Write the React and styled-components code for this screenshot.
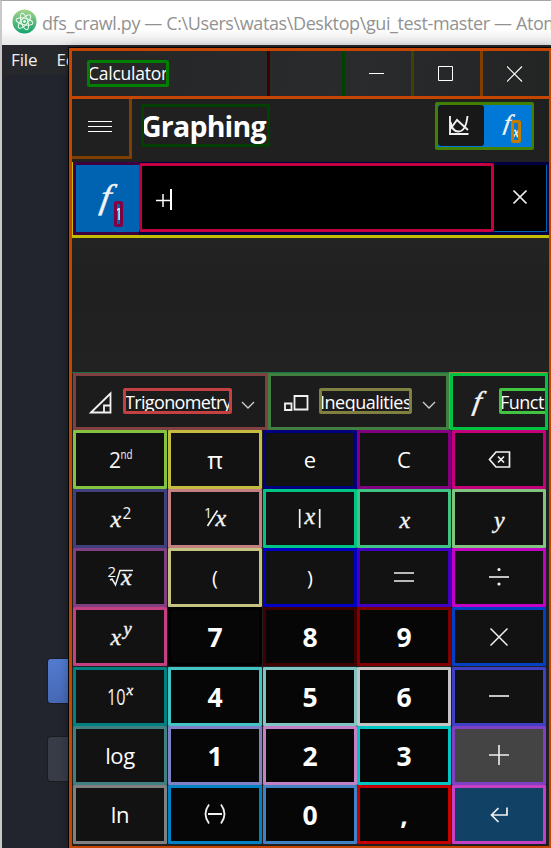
import React from "react";
import styled, { createGlobalStyle } from "styled-components";

const GlobalStyle = createGlobalStyle`
  * { box-sizing: border-box; }
  html, body { margin: 0; padding: 0; overflow: hidden; background: #22252d; }
  body { font-family: "Open Sans", "Noto Sans", sans-serif; }
  svg { display: block; flex: none; }
`;

const Editor = styled.div`
  position: relative;
  width: 551px;
  height: 848px;
  overflow: hidden;
  border-left: 2px solid #c9c9c9;
  border-top: 1px solid #a6a6a6;
  background: #22252d;
`;

const EditorTitle = styled.div`
  display: flex;
  align-items: center;
  height: 44px;
  padding: 0 0 1px 10px;
  gap: 5px;
  background: linear-gradient(#fff 0, #fff 28px, #e6e6e6 44px);
  color: #929292;
  font-size: 18px;
  letter-spacing: -0.39px;
  white-space: nowrap;
  & > svg { margin-top: -2px; }
`;

const EditorMenu = styled.div`
  display: flex;
  gap: 19px;
  height: 30px;
  padding-left: 9px;
  background: #27282c;
  color: #f0f0f0;
  font-size: 17px;
  line-height: 29px;
  letter-spacing: -0.1px;
`;

const EditorPanel = styled.div`
  display: flex;
  flex-direction: column;
  gap: 34px;
  padding: 584px 0 0 46px;
`;

const PanelButton = styled.div`
  width: 40px;
  height: 44px;
  border-radius: 3px;
  background: ${(p) => (p.$primary ? "linear-gradient(#527bd0, #4668b5)" : "#383c47")};
  box-shadow: 0 0 0 1px #1a1c22;
`;

const Calculator = styled.main`
  position: absolute;
  left: 67px;
  top: 47px;
  width: 483px;
  height: 801px;
  border: 3px solid #c64600;
  box-shadow: 0 0 0 1px #050505, 0 0 10px rgba(0, 0, 0, 0.35);
  background: #202020;
  color: #fff;
  overflow: hidden;
`;

const TitleBar = styled.div`
  display: grid;
  grid-template-columns: 198px 75px 69px 69px 66px;
  height: 48px;
  border-bottom: 3px solid #c64600;
  background: linear-gradient(100deg, #252525, #292b2d 60%, #232424);
`;

const TitleCell = styled.div`
  display: flex;
  align-items: center;
  justify-content: ${(p) => (p.$start ? "flex-start" : "center")};
  padding-left: ${(p) => (p.$start ? "15px" : "0")};
  border-right: ${(p) => (p.$line ? `3px solid ${p.$line}` : "0")};
  & > svg { margin-right: 2px; }
`;

const Tag = styled.div`
  width: ${(p) => p.$w}px;
  height: ${(p) => p.$h}px;
  flex: none;
  border: 3px solid ${(p) => p.$c};
  border-radius: 2px;
  font-size: ${(p) => p.$size}px;
  font-weight: ${(p) => p.$weight || 400};
  letter-spacing: ${(p) => p.$track || 0}px;
  line-height: ${(p) => p.$line}px;
  text-indent: ${(p) => p.$indent ?? -1}px;
  white-space: nowrap;
  overflow: hidden;
`;

const Header = styled.div`
  display: flex;
  height: 63px;
  background: #202020;
`;

const MenuButton = styled.div`
  width: 60px;
  height: 60px;
  border-right: 3px solid #803f00;
  border-bottom: 3px solid #803f00;
`;

const Heading = styled.div`
  padding: 5px 0 0 9px;
  width: 303px;
`;

const ModeSwitch = styled.div`
  display: flex;
  width: 99px;
  height: 48px;
  margin-top: 3px;
  border: 3px solid #418000;
  border-radius: 2px;
  background: #0078d7;
`;

const ModeOption = styled.div`
  width: ${(p) => (p.$active ? 47 : 46)}px;
  height: ${(p) => (p.$active ? 42 : 41)}px;
  border-radius: 3px;
  background: ${(p) => (p.$active ? "#0078d7" : "#181818")};
`;

const FunctionRow = styled.div`
  display: flex;
  height: 76px;
  border-left: 1px solid #c4bd00;
  border-bottom: 3px solid #c4bd00;
  background: #000040;
`;

const FunctionBadge = styled.div`
  width: 66px;
  height: 73px;
  border: 3px solid #3d003e;
  border-right: 0;
  background: #0063b1;
`;

const Expression = styled.div`
  width: 355px;
  height: 69px;
  margin-top: 1px;
  border: 3px solid #c40041;
  border-radius: 2px;
  background: #000;
`;

const RemoveButton = styled.div`
  width: 53px;
  height: 67px;
  margin-top: 3px;
  border-right: 1px solid #0063b1;
  border-bottom: 1px solid #0063b1;
  background: #000;
`;

const Blank = styled.div`
  height: 134px;
  background: linear-gradient(#232323, #202020 40%, #222);
`;

const Categories = styled.div`
  display: grid;
  grid-template-columns: 195px 181px 100px;
  height: 58px;
  padding-left: 1px;
  border-top: 1px solid #176f43;
`;

const Category = styled.div`
  display: flex;
  height: 57px;
  width: ${(p) => p.$w}px;
  margin-left: ${(p) => p.$shift || 0}px;
  border: 3px solid ${(p) => p.$c};
  box-shadow: ${(p) => (p.$outer ? `-1px -1px 0 ${p.$outer}` : "none")};
  background: #1c1c1c;
  padding-top: 12px;
  overflow: hidden;
  & > svg { margin-top: -12px; }
`;

const Keypad = styled.div`
  display: grid;
  grid-template-columns: 95px 95px 94px 95px 94px;
  grid-template-rows: 59px 59px 59px 60px 59px 59px 59px;
  padding-left: 1px;
`;

const Key = styled.div`
  display: flex;
  align-items: center;
  justify-content: center;
  width: 94px;
  height: 59px;
  border: 3px solid ${(p) => p.$c};
  border-radius: 1px;
  background: ${(p) => p.$bg || "#121212"};
  font-size: ${(p) => p.$size || (p.$digit ? 26.5 : 22)}px;
  font-weight: ${(p) => (p.$digit ? 700 : 400)};
  line-height: 53px;
  padding-top: ${(p) => (p.$digit ? 1 : 0)}px;
  letter-spacing: ${(p) => p.$track || 0}px;
`;

const Art = styled.svg`
  fill: none;
  stroke: ${(p) => p.$tone || "#f1f1f1"};
  stroke-width: ${(p) => p.$stroke || 1.5};
  text {
    fill: #f4f4f4;
    stroke: none;
    font-family: "Open Sans", sans-serif;
  }
  text.math {
    font-family: "Liberation Serif", serif;
    font-style: italic;
    stroke: #f4f4f4;
    stroke-width: 0.4;
  }
`;

const Glyph = ({ children, stroke }) => (
  <Art width="88" height="53" viewBox="0 0 88 53" $stroke={stroke}>
    {children}
  </Art>
);

const T = ({ x, y, s, w, children }) => (
  <text x={x} y={y} fontSize={s} textLength={w} lengthAdjust="spacingAndGlyphs">{children}</text>
);

const M = ({ x, y, s = 24, children }) => (
  <text className="math" x={x} y={y} fontSize={s}>{children}</text>
);

/* Function sign: a serif italic f, leaned a little further. */
const F = ({ x, y, s }) => (
  <text className="math" transform={`translate(${x} ${y}) skewX(-9) scale(1.1 1)`} fontSize={s}>f</text>
);

const AtomLogo = () => (
  <svg width="25" height="25" viewBox="0 0 25 25">
    <defs>
      <linearGradient id="atom" x1="0" y1="0" x2="0" y2="1">
        <stop offset="0" stopColor="#a5d58b" />
        <stop offset="1" stopColor="#12a36f" />
      </linearGradient>
    </defs>
    <circle cx="12.5" cy="12.5" r="12" fill="url(#atom)" />
    <g fill="none" stroke="#effaf0" strokeWidth="1">
      <ellipse cx="12.5" cy="12.5" rx="8.6" ry="3.3" transform="rotate(12 12.5 12.5)" />
      <ellipse cx="12.5" cy="12.5" rx="8.6" ry="3.3" transform="rotate(72 12.5 12.5)" />
      <ellipse cx="12.5" cy="12.5" rx="8.6" ry="3.3" transform="rotate(132 12.5 12.5)" />
    </g>
    <circle cx="12.5" cy="12.5" r="1.3" fill="#fff" />
  </svg>
);

const Chevron = () => (
  <Art width="14" height="51" viewBox="0 0 14 51" $stroke={1.3} $tone="#d0d0d0">
    <path d="M1 26l6 6 6-6" />
  </Art>
);

const keys = [
  { c: "#82c440", art: <><T x={33} y={34.5} s={21}>2</T><T x={44.5} y={25.5} s={12} w={12}>nd</T></> },
  { c: "#c4bc40", text: "π", size: 24 },
  { c: "#000080", text: "e" },
  { c: "#800080", text: "C" },
  { c: "#c4007d", stroke: 1.7, art: <path d="M34.5 26.5L41 19H54.5v15H41zM43 23.5l6 6m0-6l-6 6" /> },
  { c: "#404080", art: <><M x={34.5} y={34.5}>x</M><T x={46.5} y={26.5} s={15.5}>2</T></> },
  { c: "#c48080", stroke: 1.7, art: <><T x={33} y={26} s={14}>1</T><path d="M36.5 34L46.5 18.5" /><M x={44.5} y={34}>x</M></> },
  { c: "#00c482", stroke: 1.7, art: <><path d="M33.7 17v19M53.7 17v19" /><M x={38.5} y={32}>x</M></> },
  { c: "#40c482", art: <M x={39.5} y={35.5}>x</M> },
  { c: "#80c480", art: <M x={39} y={35.5}>y</M> },
  { c: "#803f80", art: <><T x={31.5} y={26} s={15}>2</T><path d="M34 29l2-1 3.5 6 4.5-14.5H57" /><M x={45} y={34}>x</M></> },
  { c: "#c4c480", text: "(", size: 20 },
  { c: "#0000c4", text: ")", size: 20 },
  { c: "#4100c4", stroke: 1.6, art: <path d="M34 22h20M34 30h20" /> },
  { c: "#c400c4", stroke: 1.6, art: <><path d="M34 26h20" /><circle cx="44" cy="18.5" r="0.8" fill="#fff" /><circle cx="44" cy="33" r="0.8" fill="#fff" /></> },
  { c: "#c44082", art: <><M x={34.5} y={35}>x</M><M x={47.5} y={25} s={18.5}>y</M></> },
  { c: "#000000", text: "7", digit: true },
  { c: "#410000", text: "8", digit: true },
  { c: "#800000", text: "9", digit: true },
  { c: "#0041c4", art: <path d="M35.5 18.5l17 17m0-17l-17 17" /> },
  { c: "#008080", art: <><T x={31} y={34.5} s={21} w={18.5}>10</T><M x={50.5} y={25} s={15}>x</M></> },
  { c: "#40c4c4", text: "4", digit: true },
  { c: "#80c4c4", text: "5", digit: true },
  { c: "#c4c4c4", text: "6", digit: true },
  { c: "#4040c4", stroke: 1.6, art: <path d="M34 26h20" /> },
  { c: "#408080", text: "log", track: -0.4 },
  { c: "#8080c4", text: "1", digit: true },
  { c: "#c480c4", text: "2", digit: true },
  { c: "#00c4c4", text: "3", digit: true },
  { c: "#8040c4", bg: "#444", stroke: 1.6, art: <path d="M34 26h20M44 16v20" /> },
  { c: "#808080", text: "ln", track: -0.2 },
  { c: "#0082c4", bg: "#060606", stroke: 1.8, art: <path d="M38 16.5q-7 9.5 0 19M37 26h14M50 16.5q7 9.5 0 19" /> },
  { c: "#4082c4", text: "0", digit: true },
  { c: "#c40000", text: ",", digit: true },
  { c: "#c440c4", bg: "#124166", stroke: 1.7, art: <path d="M52 19.5V27H36.5M43.5 20l-7 7 7 7" /> },
];

export default function App() {
  return (
    <>
      <GlobalStyle />
      <Editor>
        <EditorTitle>
          <AtomLogo />
          <span>dfs_crawl.py — C:\Users\watas\Desktop\gui_test-master — Atom</span>
        </EditorTitle>
        <EditorMenu><span>File</span><span>Edit</span></EditorMenu>
        <EditorPanel>
          <PanelButton $primary />
          <PanelButton />
        </EditorPanel>
        <Calculator>
          <TitleBar>
            <TitleCell $start $line="#410000">
              <Tag $w={82} $h={27} $c="#008000" $size={17.5} $track={-0.25} $line={21} $indent={-2}>Calculator</Tag>
            </TitleCell>
            <TitleCell $line="#004100" />
            <TitleCell $line="#414100">
              <Art width="16" height="16" $stroke={1} $tone="#fff"><path d="M0 7.5h15" /></Art>
            </TitleCell>
            <TitleCell $line="#803f00">
              <Art width="16" height="16" $stroke={1} $tone="#fff"><path d="M.5 .5h14v14H.5z" /></Art>
            </TitleCell>
            <TitleCell>
              <Art width="16" height="16" $stroke={1.1} $tone="#fff"><path d="M0 .5l15 15m0-15l-15 15" /></Art>
            </TitleCell>
          </TitleBar>
          <Header>
            <MenuButton>
              <Art width="57" height="57" $stroke={1} $tone="#fff"><path d="M16 22.5h24M16 27.5h24M16 32.5h24" /></Art>
            </MenuButton>
            <Heading>
              <Tag $w={129} $h={43} $c="#004100" $size={28.5} $weight={700} $track={-0.8} $line={39} $indent={-3}>Graphing</Tag>
            </Heading>
            <ModeSwitch>
              <ModeOption>
                <Art width="46" height="41" $stroke={1.9}>
                  <path d="M12 11v18h18.5M12 24.5l7-9.500 11 10M12.5 17c1 6 3.500 9.500 8 9.500 5 0 8-6 9-15.500" />
                </Art>
              </ModeOption>
              <ModeOption $active>
                <Art width="47" height="42">
                  <F x={19} y={25} s={22} />
                  <text className="math" x="29" y="32" fontSize="14">x</text>
                  <rect x="28.5" y="16.5" width="7" height="20" rx="1" stroke="#c47d00" strokeWidth="3" />
                </Art>
              </ModeOption>
            </ModeSwitch>
          </Header>
          <FunctionRow>
            <FunctionBadge>
              <Art width="63" height="67">
                <F x={23} y={42.5} s={34} />
                <T x={38} y={55} s={16}>1</T>
                <rect x="39.5" y="37.5" width="6" height="23" rx="1" stroke="#800041" strokeWidth="3" />
              </Art>
            </FunctionBadge>
            <Expression>
              <Art width="60" height="63" $stroke={1.5} $tone="#fff">
                <path d="M14 34.5h14M21 28v13" />
                <path d="M29 23v21" strokeWidth="2" />
              </Art>
            </Expression>
            <RemoveButton>
              <Art width="52" height="66" $stroke={1.7}><path d="M19.5 25.5l13 13m0-13l-13 13" /></Art>
            </RemoveButton>
          </FunctionRow>
          <Blank />
          <Categories>
            <Category $c="#803f40" $w={195}>
              <Art width="47" height="51" $stroke={1.8}><path d="M15 36.5L34.5 17.5v19zM28 36.5v-7h6.5" /></Art>
              <Tag $w={109} $h={26} $c="#c44041" $size={18} $track={-0.65} $line={22}>Trigonometry</Tag>
              <Art width="9" height="51" />
              <Chevron />
            </Category>
            <Category $c="#418041" $w={181}>
              <Art width="48" height="51" $stroke={1.8}><path d="M14 27.5h6.5V34H14zM23.5 20h13v13.5h-13z" /></Art>
              <Tag $w={93} $h={26} $c="#808041" $size={18} $track={-0.5} $line={22} $indent={-2}>Inequalities</Tag>
              <Art width="10" height="51" />
              <Chevron />
            </Category>
            <Category $c="#00c441" $outer="#c47d40" $w={98} $shift={1}>
              <Art width="46" height="51"><F x={19} y={34} s={27} /></Art>
              <Tag $w={49} $h={26} $c="#41c441" $size={18} $track={-0.5} $line={22} $indent={-2}>Funct</Tag>
            </Category>
          </Categories>
          <Keypad>
            {keys.map((k, i) => (
              <Key key={i} $c={k.c} $bg={k.bg || (k.digit ? "#060606" : undefined)} $digit={k.digit} $size={k.size} $track={k.track}>
                {k.art ? <Glyph stroke={k.stroke}>{k.art}</Glyph> : k.text}
              </Key>
            ))}
          </Keypad>
        </Calculator>
      </Editor>
    </>
  );
}
